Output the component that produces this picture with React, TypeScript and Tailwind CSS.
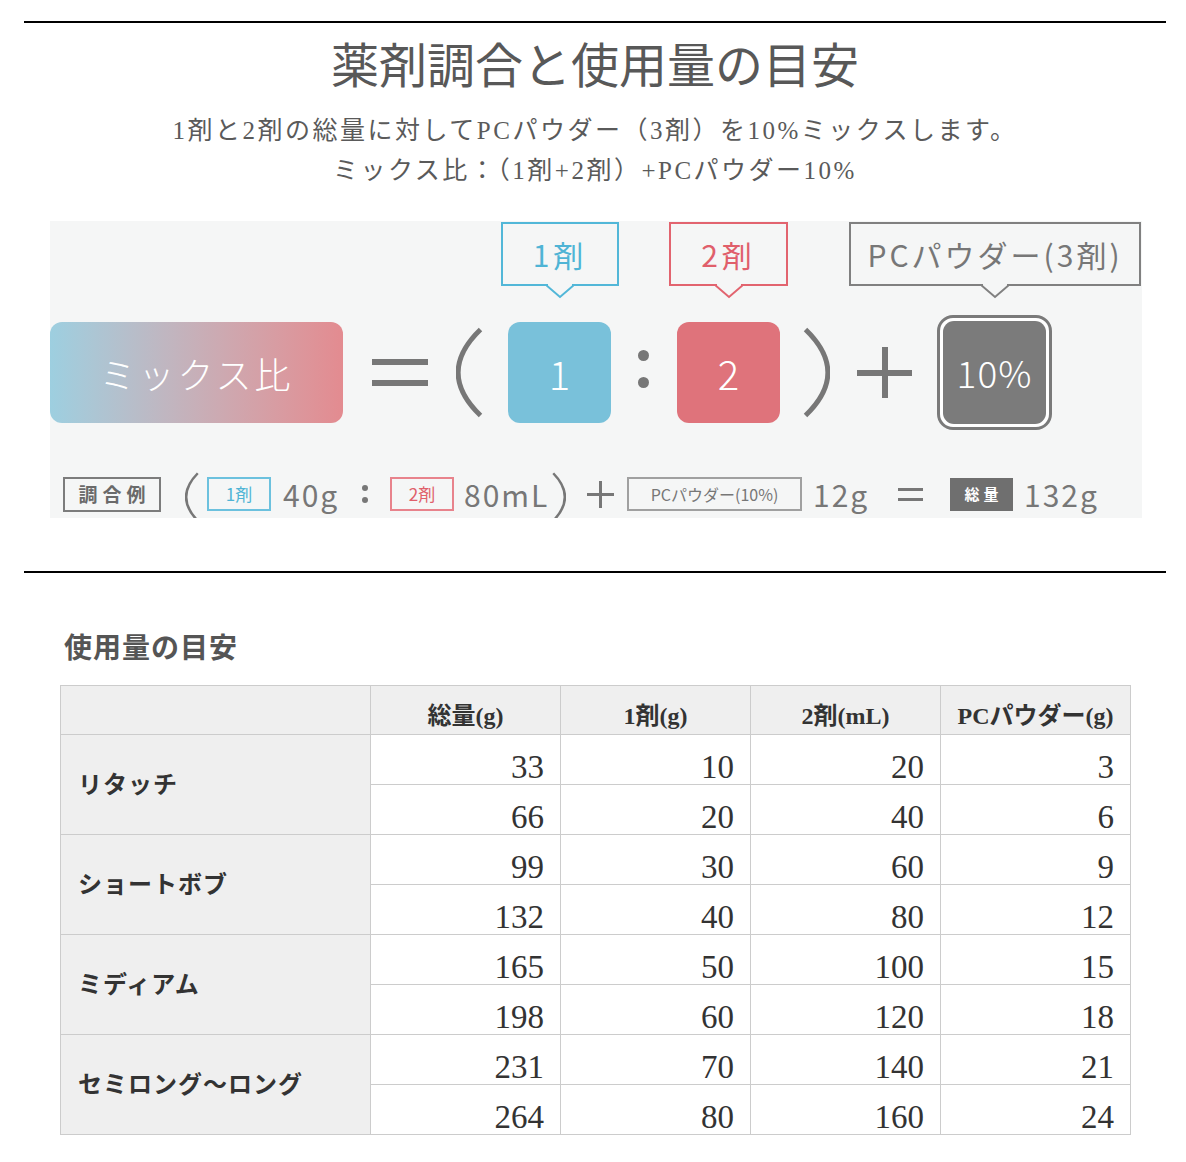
import React from "react";

const BG = "#f5f6f6";

type Row = { label: string; data: number[][] };

const rows: Row[] = [
  { label: "リタッチ", data: [[33, 10, 20, 3], [66, 20, 40, 6]] },
  { label: "ショートボブ", data: [[99, 30, 60, 9], [132, 40, 80, 12]] },
  { label: "ミディアム", data: [[165, 50, 100, 15], [198, 60, 120, 18]] },
  { label: "セミロング〜ロング", data: [[231, 70, 140, 21], [264, 80, 160, 24]] },
];

const headers = ["", "総量(g)", "1剤(g)", "2剤(mL)", "PCパウダー(g)"];

// speech-bubble tail under a callout box
const Tail = ({ color }: { color: string }) => (
  <svg
    width="28"
    height="15"
    viewBox="0 0 28 15"
    className="absolute top-full left-1/2 -translate-x-1/2"
  >
    <rect x="2" y="0" width="24" height="2" fill={BG} />
    <polyline points="0,1 14,13 28,1" fill="none" stroke={color} strokeWidth="2" />
  </svg>
);

const Paren = ({ right, w, h, sw }: { right?: boolean; w: number; h: number; sw: number }) => {
  const top = sw / 2;
  const bottom = h - sw / 2;
  const edge = w - sw / 2;
  const ctrl = -w * 0.75;
  const d = `M ${edge} ${top} Q ${ctrl} ${h / 2} ${edge} ${bottom}`;
  return (
    <svg width={w} height={h} viewBox={`0 0 ${w} ${h}`} className={right ? "-scale-x-100 shrink-0" : "shrink-0"}>
      <path d={d} fill="none" stroke="#777777" strokeWidth={sw} />
    </svg>
  );
};

const MixChart = () => (
  <div className="w-[1092px] h-[297px] ml-[26px] bg-[#f5f6f6] overflow-hidden flex flex-col font-['Noto_Sans_CJK_JP','Noto_Sans',sans-serif]">
    {/* callouts */}
    <div className="flex h-[79px] pt-[1px]">
      <div className="relative ml-[451px] w-[118px] h-[64px] border-2 border-[#52b7d8] flex items-center justify-center text-[30px] text-[#4fb4d5] tracking-[4px]">
        1剤
        <Tail color="#52b7d8" />
      </div>
      <div className="relative ml-[50px] w-[119px] h-[64px] border-2 border-[#e2646f] flex items-center justify-center text-[30px] text-[#e05f6b] tracking-[4px]">
        2剤
        <Tail color="#e2646f" />
      </div>
      <div className="relative ml-[61px] w-[292px] h-[64px] border-2 border-[#808080] flex items-center justify-center text-[30px] text-[#777777] tracking-[3px]">
        PCパウダー(3剤)
        <Tail color="#808080" />
      </div>
    </div>

    {/* ratio row */}
    <div className="flex items-center h-[145px]">
      <div className="w-[293px] h-[101px] rounded-[12px] bg-linear-to-r from-[#9dcfe0] to-[#e38b90] flex items-center justify-center text-white text-[36px] font-light tracking-[3px]">
        ミックス比
      </div>
      <div className="ml-[29px] w-[56px] flex flex-col gap-[15px]">
        <div className="h-[6px] bg-[#777777]" />
        <div className="h-[6px] bg-[#777777]" />
      </div>
      <div className="ml-[28px]">
        <Paren w={27} h={91} sw={5} />
      </div>
      <div className="ml-[25px] w-[103px] h-[101px] rounded-[12px] bg-[#79c1da] flex items-center justify-center text-white text-[40px] font-light">
        1
      </div>
      <div className="ml-[27px] mb-[8px] flex flex-col gap-[16px]">
        <div className="w-[11px] h-[11px] rounded-full bg-[#777777]" />
        <div className="w-[11px] h-[11px] rounded-full bg-[#777777]" />
      </div>
      <div className="ml-[28px] w-[103px] h-[101px] rounded-[12px] bg-[#df737b] flex items-center justify-center text-white text-[40px] font-light">
        2
      </div>
      <div className="ml-[23px]">
        <Paren right w={27} h={91} sw={5} />
      </div>
      <div className="ml-[27px] w-[55px] h-[51px] relative flex items-center justify-center">
        <div className="absolute w-[55px] h-[6px] bg-[#777777]" />
        <div className="absolute w-[6px] h-[51px] bg-[#777777]" />
      </div>
      <div className="ml-[25px] w-[115px] h-[115px] rounded-[16px] border-[3px] border-[#7a7a7a] bg-white p-[3px]">
        <div className="w-full h-full rounded-[11px] bg-[#7b7b7b] flex items-center justify-center text-white text-[37px] font-light tracking-[1px]">
          10%
        </div>
      </div>
    </div>

    {/* example row */}
    <div className="flex items-center h-[44px] mt-[27px] text-[#777777] whitespace-nowrap">
      <div className="ml-[13px] w-[98px] h-[35px] border-2 border-[#7c7c7c] flex items-center justify-center text-[19px] font-bold text-[#6a6a6a] tracking-[5px] pl-[5px]">
        調合例
      </div>
      <div className="ml-[24px] mt-[6px]">
        <Paren w={14} h={50} sw={2.5} />
      </div>
      <div className="ml-[8px] w-[64px] h-[34px] border-2 border-[#6cc1de] flex items-center justify-center text-[17px] text-[#4fb4d5]">
        1剤
      </div>
      <div className="ml-[12px] w-[60px] text-[30px] leading-none tracking-[2px]">40g</div>
      <div className="ml-[17px] w-[10px] flex flex-col gap-[6px] items-center">
        <div className="w-[6px] h-[6px] rounded-full bg-[#777777]" />
        <div className="w-[6px] h-[6px] rounded-full bg-[#777777]" />
      </div>
      <div className="ml-[20px] w-[64px] h-[34px] border-2 border-[#e8838c] flex items-center justify-center text-[17px] text-[#e05f6b]">
        2剤
      </div>
      <div className="ml-[10px] w-[86px] text-[30px] leading-none tracking-[2px]">80mL</div>
      <div className="ml-[2px] mt-[6px]">
        <Paren right w={14} h={50} sw={2.5} />
      </div>
      <div className="ml-[21px] w-[27px] h-[27px] relative flex items-center justify-center">
        <div className="absolute w-[27px] h-[3px] bg-[#777777]" />
        <div className="absolute w-[3px] h-[27px] bg-[#777777]" />
      </div>
      <div className="ml-[13px] w-[175px] h-[34px] border-2 border-[#a0a0a0] flex items-center justify-center text-[16px]">
        PCパウダー(10%)
      </div>
      <div className="ml-[11px] w-[60px] text-[30px] leading-none tracking-[2px]">12g</div>
      <div className="ml-[25px] w-[25px] flex flex-col gap-[7px]">
        <div className="h-[3px] bg-[#777777]" />
        <div className="h-[3px] bg-[#777777]" />
      </div>
      <div className="ml-[27px] w-[63px] h-[33px] bg-[#6f6f6f] flex items-center justify-center text-[15px] font-bold text-white tracking-[4px] pl-[4px]">
        総量
      </div>
      <div className="ml-[11px] text-[30px] leading-none tracking-[2px]">132g</div>
    </div>
  </div>
);

const UsageTable = () => (
  <div className="ml-[36px] w-fit grid grid-cols-[309px_189px_189px_189px_189px] grid-rows-[48px_repeat(8,49px)] gap-px bg-[#cccccc] border border-[#cccccc] text-[#333333]">
    {headers.map((h, i) => (
      <div key={i} className="bg-[#efefef] flex items-center justify-center pt-[12px] text-[24px] font-bold">
        {h}
      </div>
    ))}
    {rows.map((r) => (
      <React.Fragment key={r.label}>
        <div className="row-span-2 bg-[#efefef] flex items-center pl-[17px] text-[24px] font-bold tracking-[1px]">
          {r.label}
        </div>
        {r.data.map((line, li) =>
          line.map((n, ni) => (
            <div key={`${li}-${ni}`} className="bg-white flex items-end justify-end pr-[16px] text-[33px] leading-none">
              {n}
            </div>
          ))
        )}
      </React.Fragment>
    ))}
  </div>
);

export default function App() {
  return (
    <div className="w-[1186px] bg-white pt-[21px] pb-[28px] font-['Liberation_Serif','Noto_Sans_CJK_JP',serif]">
      <div className="ml-[24px] w-[1142px]">
        <div className="h-[2px] bg-black" />
        <h1 className="mt-[20px] text-center text-[48px] leading-[48px] text-[#585858]">
          薬剤調合と使用量の目安
        </h1>
        <div className="mt-[20px] text-center text-[25px] leading-[40px] tracking-[2.5px] text-[#5a5a5a]">
          <p>1剤と2剤の総量に対してPCパウダー（3剤）を10%ミックスします。</p>
          <p>ミックス比：（1剤+2剤）+PCパウダー10%</p>
        </div>
        <div className="mt-[30px]">
          <MixChart />
        </div>
        <div className="mt-[53px] h-[2px] bg-black" />
        <h2 className="mt-[62px] ml-[40px] text-[28px] leading-[28px] font-bold text-[#555555] tracking-[1px]">
          使用量の目安
        </h2>
        <div className="mt-[22px]">
          <UsageTable />
        </div>
      </div>
    </div>
  );
}
